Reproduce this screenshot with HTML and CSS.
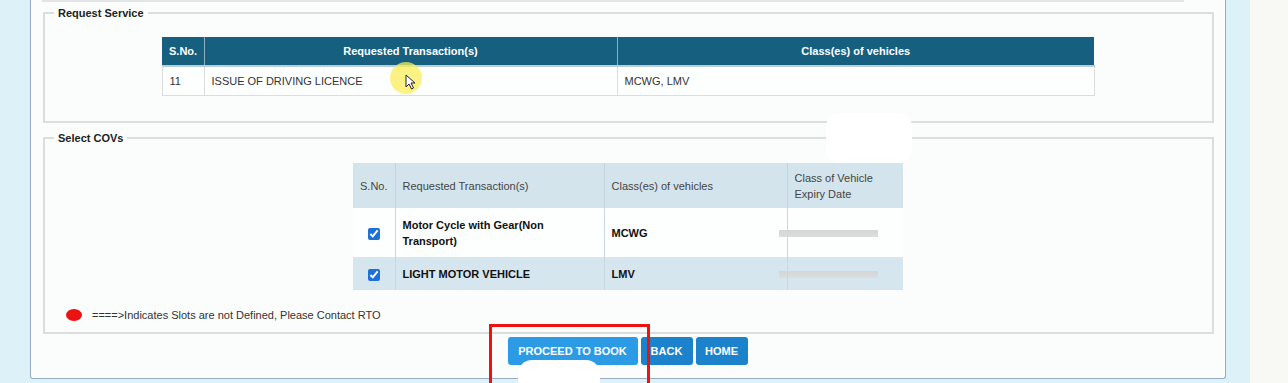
FILE: index.html
```html
<!DOCTYPE html>
<html lang="en">
<head>
<meta charset="utf-8">
<title>Request Service - Select COVs</title>
<link rel="stylesheet" href="styles.css">
</head>
<body>
<div class="strip">
  <main class="panel">
    <div class="topline"></div>

    <fieldset class="box box-service">
      <legend>Request Service</legend>
      <table class="svc">
        <colgroup><col class="c-sno"><col class="c-trans"><col class="c-class"></colgroup>
        <thead>
          <tr><th>S.No.</th><th>Requested Transaction(s)</th><th>Class(es) of vehicles</th></tr>
        </thead>
        <tbody>
          <tr><td>11</td><td>ISSUE OF DRIVING LICENCE</td><td>MCWG, LMV</td></tr>
        </tbody>
      </table>
    </fieldset>

    <fieldset class="box box-cov">
      <legend>Select COVs</legend>
      <table class="cov">
        <colgroup><col class="k-sno"><col class="k-trans"><col class="k-class"><col class="k-exp"></colgroup>
        <thead>
          <tr><th>S.No.</th><th>Requested Transaction(s)</th><th>Class(es) of vehicles</th><th>Class of Vehicle Expiry Date</th></tr>
        </thead>
        <tbody>
          <tr class="odd">
            <td class="chk"><input type="checkbox" checked></td>
            <td class="b">Motor Cycle with Gear(Non Transport)</td>
            <td class="b">MCWG</td>
            <td><div class="blur"></div></td>
          </tr>
          <tr class="even">
            <td class="chk"><input type="checkbox" checked></td>
            <td class="b">LIGHT MOTOR VEHICLE</td>
            <td class="b">LMV</td>
            <td><div class="blur"></div></td>
          </tr>
        </tbody>
      </table>
      <div class="note"><span class="dot"></span><span>====&gt;Indicates Slots are not Defined, Please Contact RTO</span></div>
    </fieldset>

    <div class="actions">
      <button class="btn btn-proceed" type="button">PROCEED TO BOOK</button>
      <button class="btn btn-small" type="button">BACK</button>
      <button class="btn btn-small" type="button">HOME</button>
    </div>
  </main>
</div>

<div class="cursor-halo"></div>
<svg class="cursor" width="11" height="16" viewBox="0 0 11 16"><path d="M1 1 L1 13 L4 10 L6.5 15 L8.5 14 L6 9 L10 9 Z" fill="#fff" stroke="#222" stroke-width="1"/></svg>
<div class="redact-top"></div>
<div class="redact-btn"></div>
<div class="mark"></div>
</body>
</html>
```

FILE: styles.css
```css
html, body {
  margin: 0;
  padding: 0;
}
body {
  position: relative;
  width: 1288px;
  height: 383px;
  overflow: hidden;
  background: #f8f9f5;
  font-family: "Liberation Sans", Arial, sans-serif;
  font-size: 11px;
  color: #333;
}
.strip {
  width: 1250px;
  height: 383px;
  box-sizing: border-box;
  padding: 0 24px 0 30px;
  background: #ddf1f8;
}
.panel {
  background: #fbfdfc;
  border: 1px solid #95acc4;
  border-top: 0;
  border-radius: 0 0 3px 3px;
  padding: 0 11px 13px 12px;
}
.topline {
  width: 1142px;
  height: 0;
  margin-left: -1px;
  border-bottom: 2px solid #e3e5e4;
}
.box {
  margin: 4px 0 0;
  border: 2px solid #dcdedd;
  padding: 17px 10px 25px 9px;
}
.box legend {
  font-weight: bold;
  font-size: 11px;
  line-height: 14px;
  color: #222;
  padding: 0 4px;
}
.box-cov {
  margin-top: 8px;
  padding-top: 18px;
  padding-bottom: 10px;
}
table {
  border-collapse: collapse;
  margin: 0 auto;
  table-layout: fixed;
}
.svc { width: 932px; }
.c-sno { width: 42px; }
.c-trans { width: 413px; }
.c-class { width: 477px; }
.svc th {
  background: #165f7f;
  color: #fff;
  font-weight: bold;
  height: 28px;
  padding: 0 7px;
  text-align: center;
  border-left: 1px solid #8fb0c0;
  border-bottom: 2px solid #b9cdd6;
}
.svc th:first-child { border-left: 0; text-align: left; padding-left: 7px; }
.svc td {
  background: #fdfefe;
  height: 28px;
  padding: 0 7px;
  border: 1px solid #dcdcdc;
  color: #333;
}
.cov { width: 550px; }
.k-sno { width: 42px; }
.k-trans { width: 209px; }
.k-class { width: 183px; }
.k-exp { width: 116px; }
.cov th {
  background: #d4e4ec;
  font-weight: normal;
  text-align: left;
  color: #444;
  line-height: 16px;
  height: 45px;
  padding: 0 7px;
  border-left: 1px solid #c4d4dc;
  box-sizing: border-box;
}
.cov th:first-child { border-left: 0; }
.cov td {
  line-height: 16px;
  padding: 9px 7px 8px;
  border-left: 1px solid #c9d8df;
  color: #111;
}
.cov td:first-child { border-left: 0; }
.cov .odd td { background: #fdfefe; height: 32px; }
.cov .even td { background: #d6e6ee; }
.cov td.b { font-weight: bold; }
.cov td.chk { text-align: center; padding: 0; }
.chk input {
  margin: 0;
  width: 12px;
  height: 12px;
  accent-color: #1f6fd8;
  vertical-align: middle;
}
.blur {
  margin-left: -16px;
  width: 99px;
  height: 7px;
  background: linear-gradient(#d4d5d5, #dcdddd);
}
.note {
  display: flex;
  align-items: center;
  gap: 10px;
  margin: 18px 0 0 12px;
  height: 14px;
  color: #333;
}
.dot {
  width: 16px;
  height: 12px;
  border-radius: 50%;
  background: #ee1111;
}
.actions {
  display: flex;
  justify-content: center;
  gap: 3px;
  margin-top: 3px;
  padding-right: 2px;
}
.btn {
  height: 28px;
  padding: 0;
  border: 0;
  border-radius: 3px;
  background: #1b82cb;
  color: #fff;
  font-family: "Liberation Sans", Arial, sans-serif;
  font-weight: bold;
  font-size: 11px;
}
.btn-proceed {
  width: 130px;
  background: #2b9be6;
}
.btn-small {
  width: 52px;
}
.cursor-halo {
  position: absolute;
  left: 390px;
  top: 62px;
  width: 32px;
  height: 32px;
  border-radius: 50%;
  background: rgba(250, 238, 90, 0.75);
}
.cursor {
  position: absolute;
  left: 405px;
  top: 74px;
}
.redact-top {
  position: absolute;
  left: 826px;
  top: 113px;
  width: 86px;
  height: 50px;
  border-radius: 14px;
  background: #ffffff;
}
.redact-btn {
  position: absolute;
  left: 518px;
  top: 360px;
  width: 82px;
  height: 30px;
  border-radius: 14px 14px 0 0;
  background: #ffffff;
}
.mark {
  position: absolute;
  left: 489px;
  top: 324px;
  width: 155px;
  height: 70px;
  border: 3px solid #ee1111;
}
```
